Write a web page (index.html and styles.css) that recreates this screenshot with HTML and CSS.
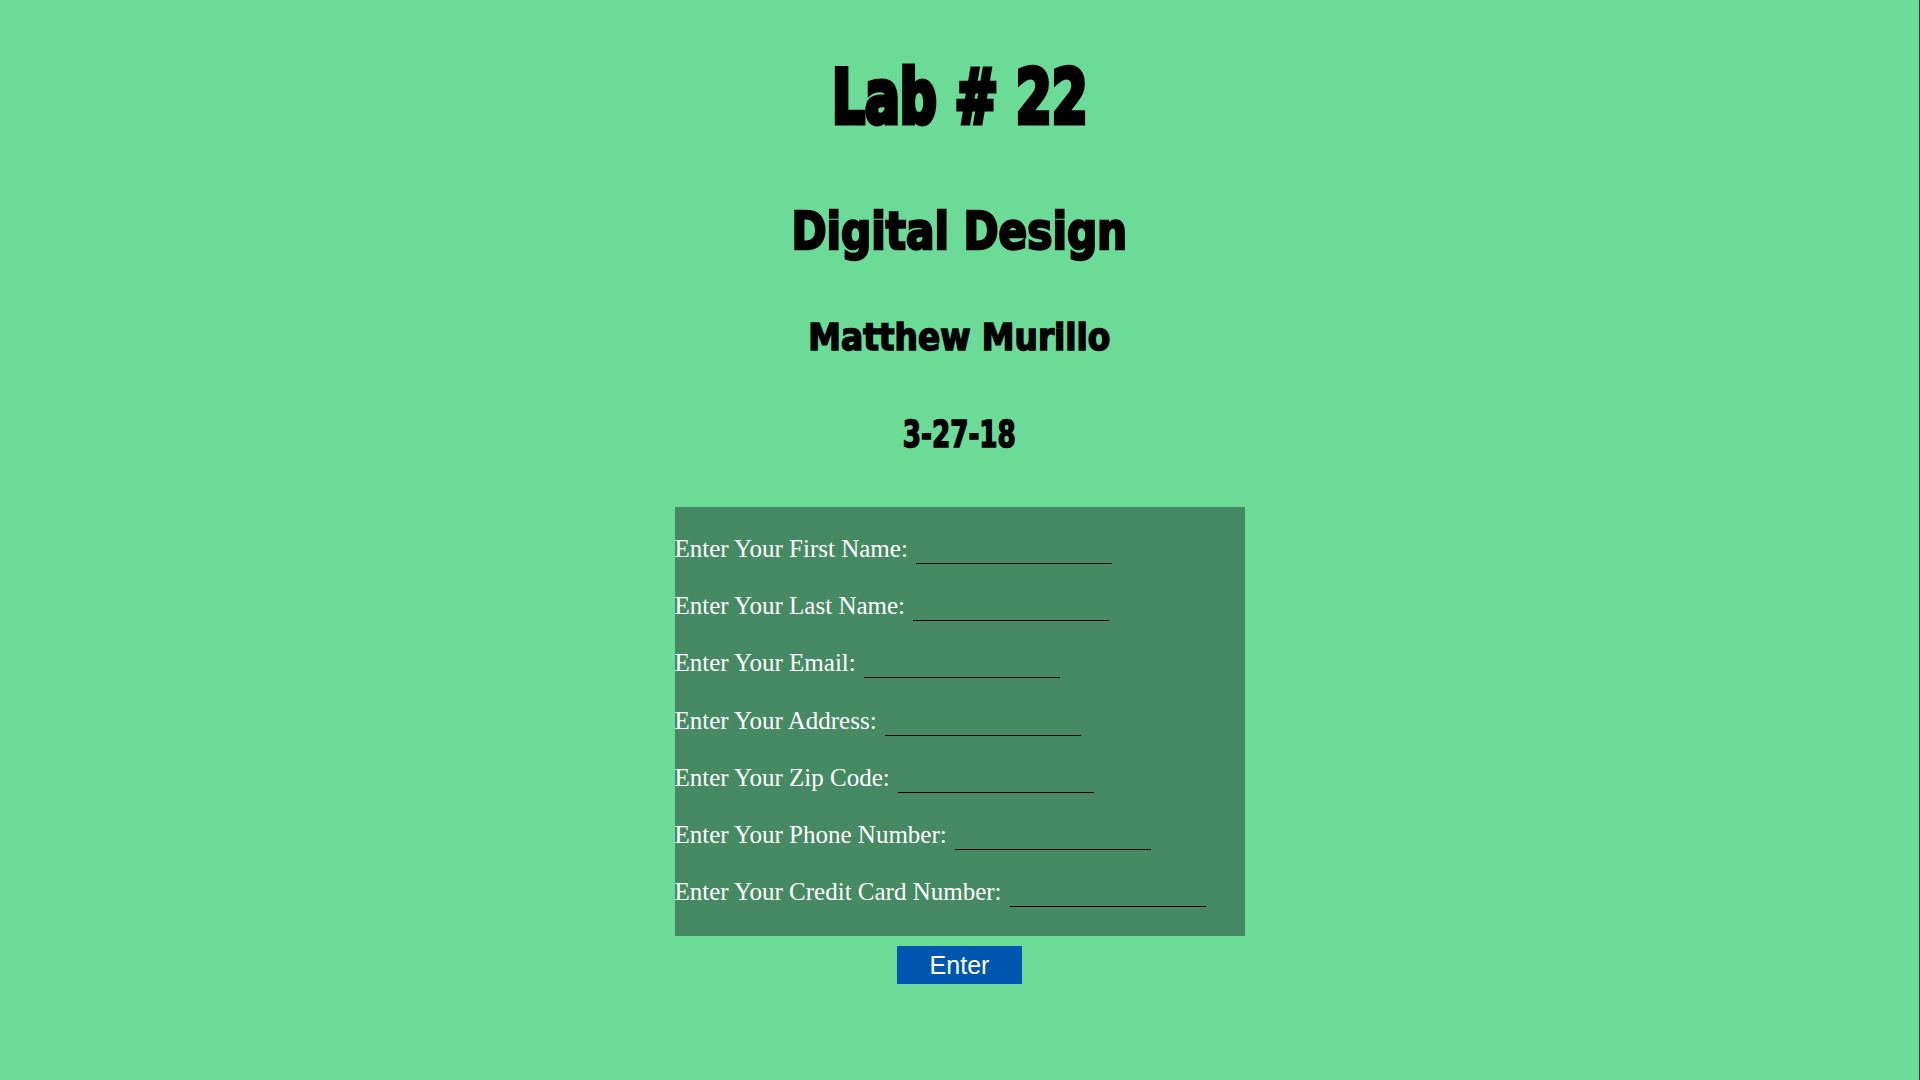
FILE: index.html
```html
<!DOCTYPE html>
<html lang="en">
<head>
<meta charset="utf-8">
<title>Lab # 22</title>
<link rel="stylesheet" href="styles.css">
</head>
<body>
<main class="page">
  <h1 class="title">Lab # 22</h1>
  <h2 class="subtitle">Digital Design</h2>
  <h3 class="name">Matthew Murillo</h3>
  <h4 class="date">3-27-18</h4>
  <form class="form">
    <div class="fields">
      <p class="row">Enter Your First Name:<input class="field" type="text"></p>
      <p class="row">Enter Your Last Name:<input class="field" type="text"></p>
      <p class="row">Enter Your Email:<input class="field" type="text"></p>
      <p class="row">Enter Your Address:<input class="field" type="text"></p>
      <p class="row">Enter Your Zip Code:<input class="field" type="text"></p>
      <p class="row">Enter Your Phone Number:<input class="field" type="text"></p>
      <p class="row">Enter Your Credit Card Number:<input class="field" type="text"></p>
    </div>
    <button class="submit" type="button">Enter</button>
  </form>
</main>
</body>
</html>
```
FILE: styles.css
```css
html {
  background: #6ddb98;
}

body {
  margin: 0;
  min-height: 100vh;
  background: #6ddb98;
  border-right: 1px solid #2b4a3b;
  font-family: "Liberation Serif", "Times New Roman", serif;
}

.page {
  display: flex;
  flex-direction: column;
  align-items: center;
  padding-top: 60px;
}

.title,
.subtitle,
.name,
.date {
  margin: 0;
  color: #000;
  font-family: Impact, "DejaVu Sans Condensed", sans-serif;
  font-weight: bold;
  text-align: center;
  white-space: nowrap;
  transform-origin: center center;
}

.title {
  font-size: 74px;
  line-height: 74px;
  -webkit-text-stroke: 5px #000;
  transform: scaleX(0.775);
}

.subtitle {
  margin-top: 70.5px;
  font-size: 52.4px;
  line-height: 52.4px;
  -webkit-text-stroke: 2.5px #000;
  transform: scaleX(0.896);
}

.name {
  margin-top: 63px;
  font-size: 36.8px;
  line-height: 36.8px;
  -webkit-text-stroke: 1.5px #000;
  transform: scaleX(0.991);
}

.date {
  margin-top: 59.8px;
  font-size: 36.8px;
  line-height: 36.8px;
  -webkit-text-stroke: 1.5px #000;
  transform: scaleX(0.792);
}

.form {
  display: flex;
  flex-direction: column;
  align-items: center;
  margin-top: 53.8px;
}

.fields {
  display: flex;
  flex-direction: column;
  gap: 25.2px;
  width: 570px;
  padding: 26px 0 28px;
  background: #468a63;
}

.row {
  margin: 0;
  height: 32px;
  line-height: 32px;
  font-size: 25px;
  color: #fff;
  white-space: nowrap;
}

.field {
  box-sizing: border-box;
  width: 196px;
  height: 29px;
  margin: 0 0 0 8px;
  padding: 0;
  border: 0;
  border-bottom: 1px solid #000;
  background: transparent;
  font-family: "Liberation Serif", "Times New Roman", serif;
  font-size: 25px;
  line-height: 28px;
  vertical-align: baseline;
  outline: none;
}

.submit {
  box-sizing: border-box;
  width: 125px;
  height: 38px;
  margin-top: 10px;
  padding: 5px 0;
  border: 0;
  background: #0057b0;
  color: #fff;
  font-family: "Liberation Sans", Arial, sans-serif;
  font-size: 25px;
  line-height: 28px;
  text-align: center;
}
```
